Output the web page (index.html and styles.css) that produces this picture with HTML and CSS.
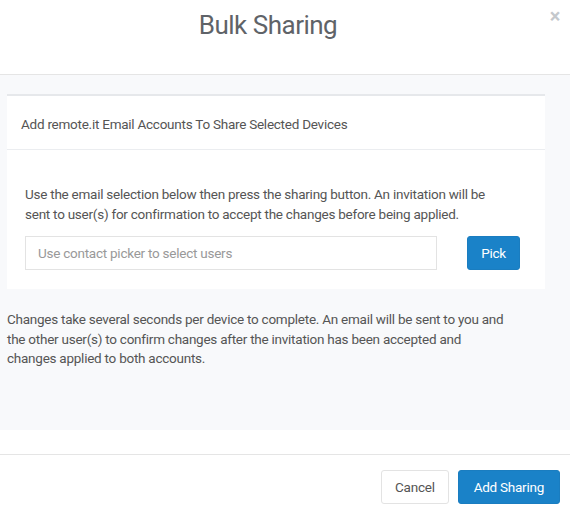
FILE: index.html
```html
<!DOCTYPE html>
<html>
<head>
<meta charset="utf-8">
<link rel="stylesheet" href="styles.css">
</head>
<body>
<div class="modal">
  <div class="modal-header">
    <h1 class="title">Bulk Sharing</h1>
    <span class="close">×</span>
  </div>
  <div class="modal-body">
    <div class="card">
      <div class="card-header">Add remote.it Email Accounts To Share Selected Devices</div>
      <div class="card-body">
        <p class="card-text">Use the email selection below then press the sharing button. An invitation will be sent to user(s) for confirmation to accept the changes before being applied.</p>
        <div class="picker-row">
          <input class="picker-input" type="text" placeholder="Use contact picker to select users">
          <button class="btn btn-primary btn-pick">Pick</button>
        </div>
      </div>
    </div>
    <p class="note">Changes take several seconds per device to complete. An email will be sent to you and the other user(s) to confirm changes after the invitation has been accepted and changes applied to both accounts.</p>
  </div>
  <div class="spacer"></div>
  <div class="modal-footer">
    <button class="btn btn-default">Cancel</button>
    <button class="btn btn-primary btn-add">Add Sharing</button>
  </div>
</div>
</body>
</html>
```
FILE: styles.css
```css
* { box-sizing: border-box; }
html, body { margin: 0; padding: 0; background: #fff; }
body {
  font-family: Roboto, "Liberation Sans", sans-serif;
  color: #555;
  font-size: 13.5px;
  letter-spacing: -0.25px;
  width: 570px;
  height: 510px;
  overflow: hidden;
}
.modal { width: 570px; }
.modal-header {
  position: relative;
  height: 75px;
  border-bottom: 1px solid #e5e5e5;
  display: flex;
  justify-content: center;
}
.title {
  margin: 9px 34px 0 0;
  font-weight: 400;
  font-size: 26px;
  letter-spacing: -0.5px;
  line-height: 32px;
  color: #5f6368;
}
.close {
  position: absolute;
  right: 10px;
  top: 4px;
  font-size: 20px;
  font-weight: 700;
  color: #c4c8cc;
  line-height: 24px;
}
.modal-body {
  background: #f8f9fb;
  padding: 19px 25px 1px 7px;
  height: 355px;
}
.card {
  background: #fff;
  border-top: 2px solid #e6e8eb;
}
.card-header {
  height: 54px;
  padding: 0 14px;
  display: flex;
  align-items: center;
  border-bottom: 1px solid #ebedf0;
  color: #555;
  padding-top: 3px;
}
.card-body {
  padding: 34px 25px 19px 18px;
}
.card-text {
  margin: 0 0 12px;
  max-width: 470px;
  line-height: 20px;
  color: #555;
}
.picker-row {
  display: flex;
  align-items: center;
}
.picker-input {
  width: 412px;
  height: 34px;
  border: 1px solid #e3e3e3;
  padding: 0 12px;
  font-family: inherit;
  font-size: 13.5px;
  letter-spacing: -0.25px;
  color: #555;
  outline: none;
}
.picker-input::placeholder { color: #999; }
.btn {
  font-family: inherit;
  font-size: 13.5px;
  letter-spacing: -0.25px;
  height: 34px;
  border-radius: 3px;
  padding: 0 13px;
  cursor: pointer;
}
.btn-primary {
  background: #1a82c8;
  border: 1px solid #1a7dc0;
  color: #fff;
}
.btn-add { padding: 0 15px; }
.btn-pick {
  margin-left: 30px;
  width: 53px;
  padding: 0;
}
.btn-default {
  background: #fff;
  border: 1px solid #e3e3e3;
  color: #555;
}
.note {
  margin: 21px 0 0;
  max-width: 505px;
  line-height: 19.5px;
  color: #555;
}
.spacer {
  height: 25px;
  border-bottom: 1px solid #e5e5e5;
}
.modal-footer {
  display: flex;
  justify-content: flex-end;
  gap: 9px;
  padding: 15px 10px 0 0;
}
```
